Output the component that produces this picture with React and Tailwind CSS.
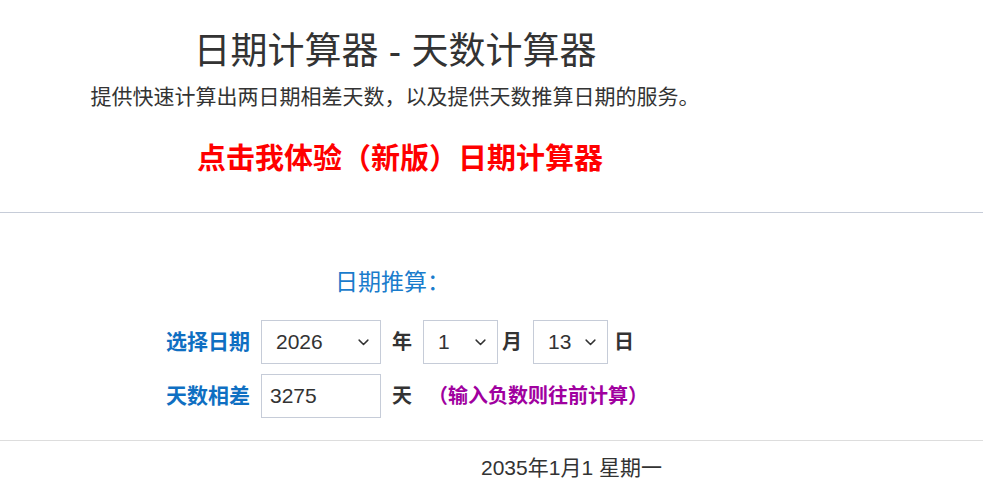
import { useState } from "react";

const FONT = { fontFamily: '"Liberation Sans", "Noto Sans CJK SC", sans-serif' };

function Chevron() {
  return (
    <svg width="15" height="15" viewBox="0 0 24 24" fill="none" stroke="#333" strokeWidth="2.4" strokeLinecap="round" strokeLinejoin="round">
      <path d="m5 9 7 7 7-7" />
    </svg>
  );
}

function Select({ value, options, width, onChange }) {
  return (
    <div className={`relative h-[44px] ${width}`}>
      <select
        value={value}
        onChange={(e) => onChange(e.target.value)}
        className="w-full h-full appearance-none bg-white border border-[#c6ccd8] pl-[14px] pr-8 text-[21px] text-[#333] focus:outline-none"
      >
        {options.map((o) => (
          <option key={o} value={o}>
            {o}
          </option>
        ))}
      </select>
      <span className="absolute right-[10px] top-1/2 -translate-y-1/2 pointer-events-none">
        <Chevron />
      </span>
    </div>
  );
}

const range = (a, b) => Array.from({ length: b - a + 1 }, (_, i) => String(a + i));

export default function App() {
  const [year, setYear] = useState("2026");
  const [month, setMonth] = useState("1");
  const [day, setDay] = useState("13");
  const [diff, setDiff] = useState("3275");

  const d = new Date(Number(year), Number(month) - 1, Number(day) + Number(diff || 0));
  const week = ["日", "一", "二", "三", "四", "五", "六"][d.getDay()];
  const result = isNaN(d) ? "" : `${d.getFullYear()}年${d.getMonth() + 1}月${d.getDate()} 星期${week}`;

  return (
    <div className="w-[983px] h-[494px] bg-white overflow-hidden" style={FONT}>
      {/* Header */}
      <div className="w-[790px] flex flex-col items-center pt-[27px]">
        <h1 className="text-[37px] leading-[50px] text-[#333]">日期计算器 - 天数计算器</h1>
        <p className="text-[21px] leading-[30px] text-[#333] mt-[5px]">提供快速计算出两日期相差天数，以及提供天数推算日期的服务。</p>
        <a href="#" className="mt-[29px] ml-[10px] text-[29px] leading-[36px] font-bold text-[#ff0000]">
          点击我体验（新版）日期计算器
        </a>
      </div>

      <div className="mt-[35px] border-t border-[#c6ccd8]" />

      {/* Form */}
      <div className="pt-[54px]">
        <div className="pl-[335px] text-[23px] leading-[30px] text-[#1a7ccc]">日期推算：</div>

        <div className="mt-[23px] flex items-center">
          <div className="w-[250px] text-right text-[21px] font-bold text-[#0f6fc2]">选择日期</div>
          <div className="ml-[11px] flex items-center">
            <Select value={year} options={range(1900, 2100)} width="w-[120px]" onChange={setYear} />
            <span className="ml-[11px] w-[20px] text-[20px] font-bold text-[#333]">年</span>
            <div className="ml-[11px]">
              <Select value={month} options={range(1, 12)} width="w-[75px]" onChange={setMonth} />
            </div>
            <span className="ml-[4px] w-[20px] text-[20px] font-bold text-[#333]">月</span>
            <div className="ml-[11px]">
              <Select value={day} options={range(1, 31)} width="w-[75px]" onChange={setDay} />
            </div>
            <span className="ml-[6px] text-[20px] font-bold text-[#333]">日</span>
          </div>
        </div>

        <div className="mt-[10px] flex items-center">
          <div className="w-[250px] text-right text-[21px] font-bold text-[#0f6fc2]">天数相差</div>
          <input
            value={diff}
            onChange={(e) => setDiff(e.target.value)}
            className="ml-[11px] w-[120px] h-[44px] border border-[#c6ccd8] px-[8px] text-[21px] text-[#333] focus:outline-none"
          />
          <span className="ml-[11px] text-[20px] font-bold text-[#333]">天</span>
          <span className="ml-[16px] text-[20px] font-bold text-[#a0009f]">（输入负数则往前计算）</span>
        </div>

        <div className="mt-[22px] border-t border-[#dddddd]" />
        <div className="pl-[481px] pt-[14px] text-[21px] leading-[26px] text-[#333]">{result}</div>
      </div>
    </div>
  );
}
